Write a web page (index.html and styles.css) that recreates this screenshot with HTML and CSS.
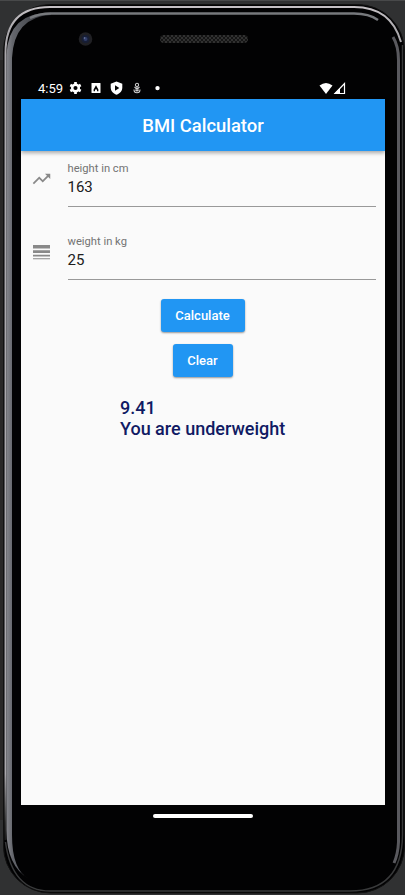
FILE: index.html
```
<!DOCTYPE html>
<html lang="en">
<head>
<meta charset="utf-8">
<title>BMI Calculator</title>
<link rel="stylesheet" href="styles.css">
</head>
<body>
<div class="device">
  <svg class="frame" viewBox="0 0 405 895" aria-hidden="true">
    <defs>
      <linearGradient id="rim" x1="0" y1="0" x2="0" y2="1">
        <stop offset="0" stop-color="#c4c0c4"/><stop offset=".03" stop-color="#aaa8ac"/><stop offset=".92" stop-color="#aaa8ac"/><stop offset=".98" stop-color="#333"/><stop offset="1" stop-color="#1a1a1a"/>
      </linearGradient>
      <linearGradient id="side" x1="0" y1="0" x2="1" y2="0">
        <stop offset="0" stop-color="#85868c"/><stop offset=".14" stop-color="#64666c"/><stop offset="1" stop-color="#292b31"/>
      </linearGradient>
      <pattern id="mesh" width="4" height="4" patternUnits="userSpaceOnUse">
        <rect width="4" height="4" fill="#151515"/><path d="M0 0l2 2 2-2M0 4l2-2 2 2" stroke="#3e3e3e" stroke-width=".7" fill="none"/>
      </pattern>
    </defs>
    <rect width="405" height="895" fill="#303132"/>
    <path d="M0 .5H405" stroke="#48494a"/>
    <path d="M0 60H4V820H0z" fill="#292827"/>
    <rect x="3.5" y="4.5" width="401" height="888.5" rx="47" fill="#020203" stroke="#111"/>
    <path d="M5.5 840V53Q5.500 7 50 7H354Q391 7 401 42" fill="none" stroke="url(#rim)" stroke-width="2"/>
    <path d="M402.500 45V835Q402 891 350 891H50Q12 891 5.500 842" fill="none" stroke="#393a3b" stroke-width="1.500"/>
    <path d="M6.500 55Q8 12.500 51 12.500V15Q14 17 12 58V835Q12 870 29 879Q6.500 866 6.500 830z" fill="url(#side)"/>
    <path d="M30 18Q39 13.500 51 13.500H354Q369 13.500 378 20" fill="none" stroke="#77797d" stroke-width="2.500"/>
    <path d="M393 37Q398.500 46 398.500 60V842Q398 854 394 863" fill="none" stroke="#59595e" stroke-width="3"/>
    <circle cx="85.500" cy="39" r="6.800" fill="#202024"/>
    <circle cx="85.500" cy="39" r="4" fill="#171e35"/>
    <circle cx="85.500" cy="39" r="2" fill="#303c68"/>
    <circle cx="84.500" cy="38" r=".8" fill="#7783a4"/>
    <rect x="160" y="35" width="88" height="8" rx="4" fill="url(#mesh)"/>
  </svg>
  <main class="screen">
    <div class="status">
      <span class="clock">4:59</span>
      <svg class="notices" viewBox="0 0 94 14" aria-hidden="true">
        <g fill="none" stroke="#fff">
          <circle cx="6.500" cy="7" r="3.300" stroke-width="2.500"/>
          <path d="M6.500 1v2M6.500 11v2M1.300 4l1.800 1M9.900 9l1.800 1M1.300 10l1.800-1M9.900 5l1.800-1" stroke-width="2.700"/>
        </g>
        <rect x="22.500" y="2" width="9" height="10" rx=".6" fill="#fff"/>
        <path d="M24.600 10.300V8.500L27 4.200 29.400 8.500v1.800H28V8.500h-2v1.800z" fill="#050505"/>
        <path d="M47.500.4L53.300 2.800V6.500C53.300 10 51 12.500 47.500 13.700 44 12.500 41.700 10 41.700 6.500V2.800z" fill="#fff"/>
        <path d="M46 4.200L50.300 7 46 9.800z" fill="#050505"/>
        <g fill="none" stroke="#d0d0d0" stroke-width="1.100"><circle cx="68" cy="3.900" r="1.600"/><path d="M68 5.500v2.500M65.500 6L68 8.300 70.500 6M65 8.500q0 3.300 3 3.300t3-3.300M66.300 8.700L68 10l1.700-1.300"/></g>
        <circle cx="88.500" cy="7.100" r="2.200" fill="#fff"/>
      </svg>
      <svg class="signals" viewBox="0 0 28 13" aria-hidden="true">
        <path d="M.5 3.500Q7 -1.500 13.500 3.500L7 12z" fill="#fff"/>
        <path d="M16 11.500L25.500 1.500v10z" fill="none" stroke="#fff" stroke-width="1.200"/><path d="M15 12l6-6v6z" fill="#fff"/>
      </svg>
    </div>
    <header class="appbar"><h1>BMI Calculator</h1></header>
    <section class="content">
      <div class="field">
        <svg class="icon" viewBox="0 0 24 24" aria-hidden="true"><path fill="#898989" d="M16 6l2.290 2.290-4.880 4.880-4-4L2 16.590 3.410 18l6-6 4 4 6.300-6.290L22 12V6z"/></svg>
        <div class="input"><div class="label">height in cm</div><div class="value">163</div></div>
      </div>
      <div class="field">
        <svg class="icon" viewBox="0 0 24 24" aria-hidden="true"><path fill="#898989" d="M2.300 17h19.400v-2H2.300zM2.300 20.300h19.400v-1.300H2.300zM2.300 13h19.400v-3H2.300zM2.300 4v4h19.400V4z"/></svg>
        <div class="input"><div class="label">weight in kg</div><div class="value">25</div></div>
      </div>
      <button class="button calculate">Calculate</button>
      <button class="button clear">Clear</button>
      <div class="result">9.41<br>You are underweight</div>
    </section>
    <div class="navigation"><div class="handle"></div></div>
  </main>
</div>
</body>
</html>
```
FILE: styles.css
```
* { box-sizing: border-box; }
body { margin: 0; font-family: Roboto, sans-serif; background: #303132; }
.device { position: relative; width: 405px; height: 895px; overflow: hidden; padding: 77px 20px 0 21px; }
.frame { position: absolute; inset: 0; width: 405px; height: 895px; }
.screen { position: relative; width: 364px; }
.status { height: 22px; display: flex; align-items: center; padding-left: 17px; color: #fff; }
.clock { width: 31px; padding-top: 1px; font-size: 13px; line-height: 22px; white-space: nowrap; }
.notices { width: 94px; height: 14px; }
.signals { width: 28px; height: 13px; margin-left: 156px; }
.appbar { position: relative; height: 52px; background: #2196f3; box-shadow: 0 2px 4px #0005; display: flex; align-items: center; justify-content: center; }
h1 { margin: 2px 0 0; color: #fff; font-size: 18.4px; font-weight: 500; line-height: 24px; }
.content { height: 654px; padding: 8px 9px 0 10px; background: #fafafa; display: flex; flex-direction: column; align-items: center; }
.field { width: 100%; height: 73px; display: flex; align-items: flex-start; }
.icon { width: 21px; height: 22px; margin: 9px 15.5px 0 0; flex-shrink: 0; }
.input { flex: 1; height: 48px; border-bottom: 1px solid #999; }
.label { height: 18px; color: #737373; font-size: 11.2px; line-height: 19px; }
.value { color: #202020; font-size: 15px; line-height: 21px; }
.button { height: 33px; border: 0; border-radius: 3px; background: #2196f3; color: #fff; font: 500 13px Roboto, sans-serif; box-shadow: 0 1px 2px #0006; padding: 0; margin-right: 2px; }
.calculate { width: 84px; margin-top: -6px; margin-bottom: 12px; }
.clear { width: 60px; }
.result { width: 165px; margin-top: 20px; margin-right: 2px; color: #101a63; font-size: 18px; font-weight: 500; line-height: 21px; white-space: nowrap; }
.navigation { height: 24px; display: flex; justify-content: center; padding-top: 9px; }
.handle { width: 100px; height: 4px; border-radius: 2px; background: #fff; }
```
